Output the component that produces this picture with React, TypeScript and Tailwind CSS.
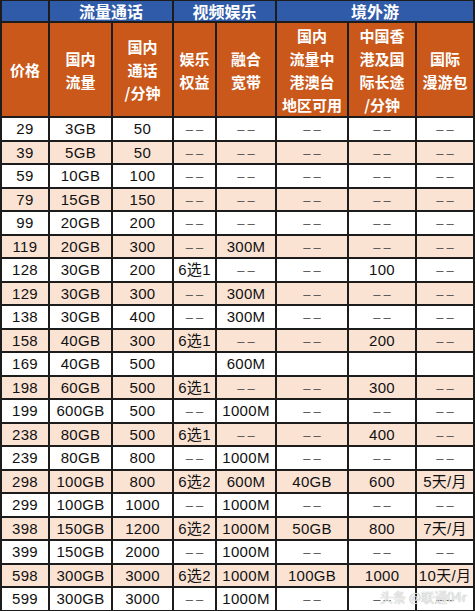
const rows: string[][] = [
  ["29", "3GB", "50", "--", "--", "--", "--", "--"],
  ["39", "5GB", "50", "--", "--", "--", "--", "--"],
  ["59", "10GB", "100", "--", "--", "--", "--", "--"],
  ["79", "15GB", "150", "--", "--", "--", "--", "--"],
  ["99", "20GB", "200", "--", "--", "--", "--", "--"],
  ["119", "20GB", "300", "--", "300M", "--", "--", "--"],
  ["128", "30GB", "200", "6选1", "--", "--", "100", "--"],
  ["129", "30GB", "300", "--", "300M", "--", "--", "--"],
  ["138", "30GB", "400", "--", "300M", "--", "--", "--"],
  ["158", "40GB", "300", "6选1", "--", "--", "200", "--"],
  ["169", "40GB", "500", "", "600M", "", "", ""],
  ["198", "60GB", "500", "6选1", "--", "--", "300", "--"],
  ["199", "600GB", "500", "--", "1000M", "--", "--", "--"],
  ["238", "80GB", "500", "6选1", "--", "--", "400", "--"],
  ["239", "80GB", "800", "--", "1000M", "--", "--", "--"],
  ["298", "100GB", "800", "6选2", "600M", "40GB", "600", "5天/月"],
  ["299", "100GB", "1000", "--", "1000M", "--", "--", "--"],
  ["398", "150GB", "1200", "6选2", "1000M", "50GB", "800", "7天/月"],
  ["399", "150GB", "2000", "--", "1000M", "--", "--", "--"],
  ["598", "300GB", "3000", "6选2", "1000M", "100GB", "1000", "10天/月"],
  ["599", "300GB", "3000", "--", "1000M", "--", "--", "--"],
]

const widths = ["w-[48px]", "w-[63px]", "w-[61px]", "w-[43px]", "w-[60px]", "w-[72px]", "w-[68px]", "w-[58px]"]

const headers: string[][] = [
  ["国内", "流量"],
  ["国内", "通话", "/分钟"],
  ["娱乐", "权益"],
  ["融合", "宽带"],
  ["国内", "流量中", "港澳台", "地区可用"],
  ["中国香", "港及国", "际长途", "/分钟"],
  ["国际", "漫游包"],
]

const cell = "border-2 border-[#1c1c1c] text-center p-0"

function Dash() {
  return <span className="tracking-[3px] pl-[3px] text-[#555] text-[13px] inline-block">––</span>
}

export default function App() {
  return (
    <div className="relative w-[475px] h-[611px] overflow-hidden bg-white font-['Noto_Sans_CJK_SC','Noto_Sans',sans-serif]">
      <table className="border-collapse table-fixed w-[473px] mt-[-1px]">
        <colgroup>
          {widths.map((w, i) => (
            <col key={i} className={w} />
          ))}
        </colgroup>
        <thead>
          <tr className="h-[22px] bg-[#2f5ba8] text-white font-bold text-[16px] leading-none">
            <th className={cell}></th>
            <th className={cell} colSpan={2}>流量通话</th>
            <th className={cell} colSpan={2}>视频娱乐</th>
            <th className={cell} colSpan={3}>境外游</th>
          </tr>
          <tr className="h-[95px] bg-[#c9581a] text-white font-bold text-[15px] leading-[23px]">
            <th className={cell}>价格</th>
            {headers.map((h, i) => (
              <th key={i} className={cell}>
                {h.map((line, j) => (
                  <div key={j} className="whitespace-nowrap">{line}</div>
                ))}
              </th>
            ))}
          </tr>
        </thead>
        <tbody className="font-['Liberation_Sans','Noto_Sans_CJK_SC',sans-serif]">
          {rows.map((r, i) => (
            <tr key={i} className={`h-[23.5px] text-[15px] leading-none text-[#111] ${i % 2 === 1 ? "bg-[#fbe3d4]" : "bg-white"}`}>
              {r.map((v, j) => (
                <td key={j} className={`${cell} whitespace-nowrap tracking-[0.3px]`}>
                  {v === "--" ? <Dash /> : v}
                </td>
              ))}
            </tr>
          ))}
        </tbody>
      </table>
      <div className="absolute left-[380px] top-[587px] text-[13px] text-white/80 [text-shadow:0_0_1px_#888] pointer-events-none">
        头条 @联通04r
      </div>
    </div>
  )
}
